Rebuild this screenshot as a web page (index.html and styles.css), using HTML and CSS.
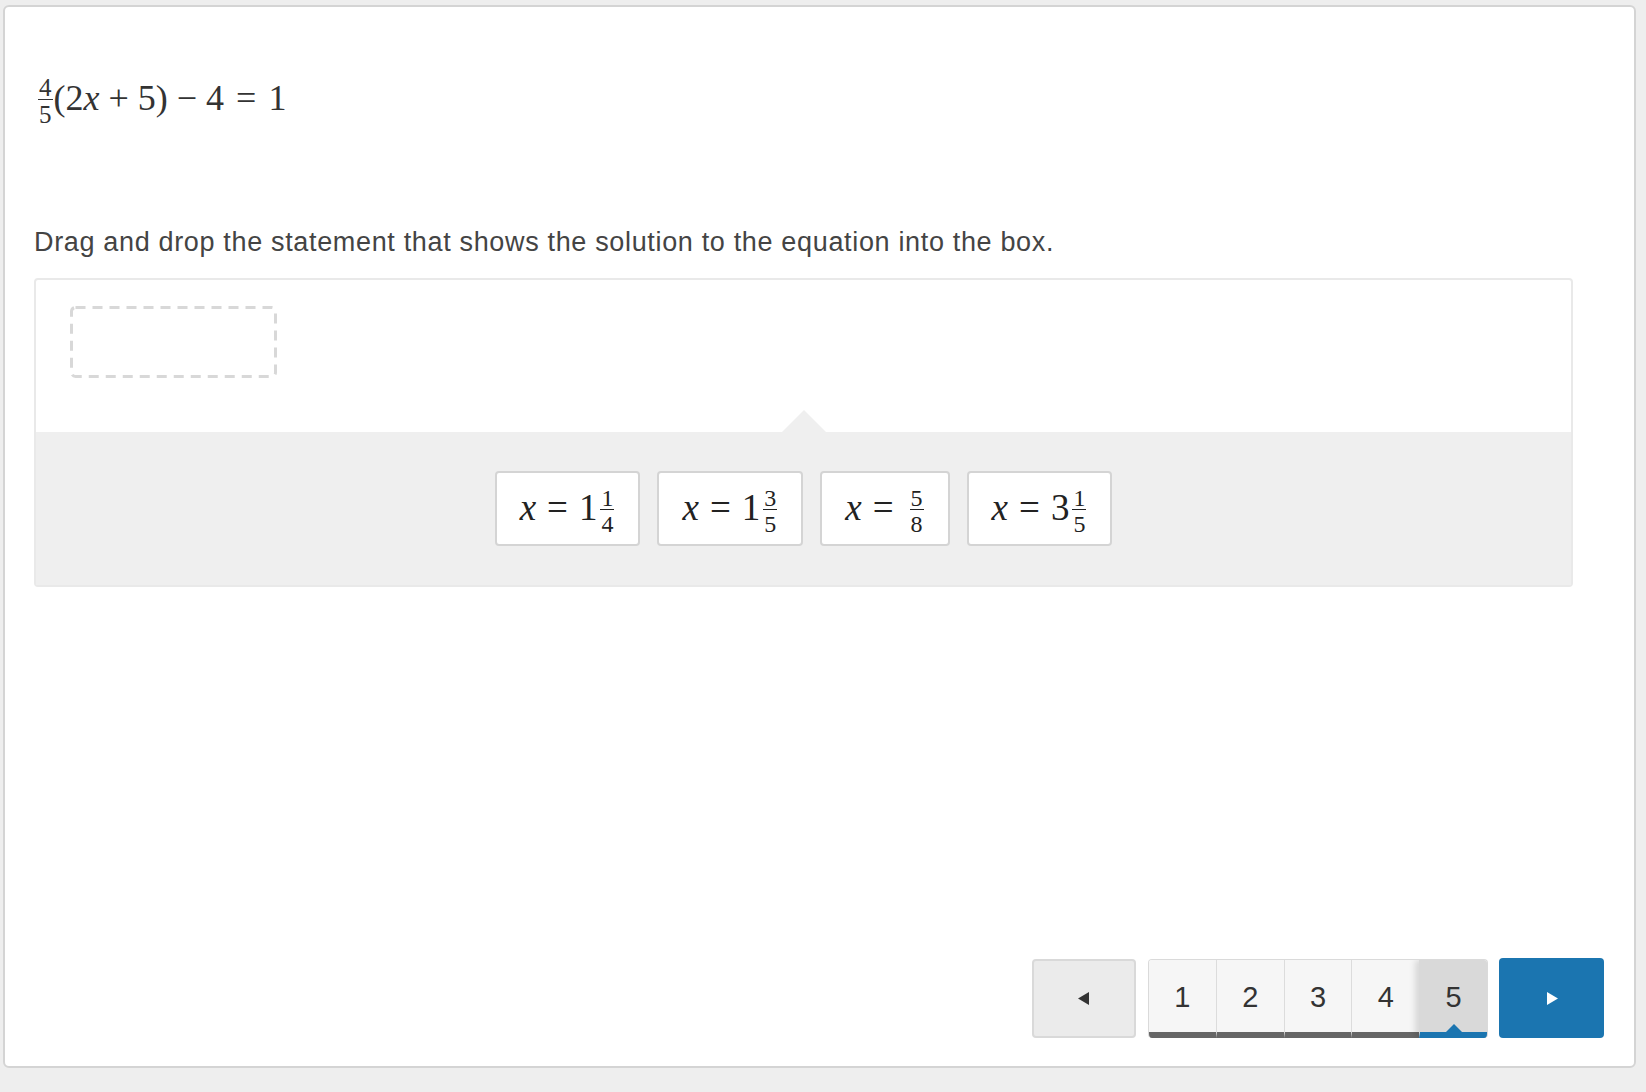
FILE: index.html
```html
<!DOCTYPE html>
<html>
<head>
<meta charset="utf-8">
<link rel="stylesheet" href="styles.css">
</head>
<body>
<div class="card">
  <div class="equation">
    <span class="frac"><span class="num">4</span><span class="den">5</span></span><span>(2</span><i class="mi">x</i><span class="op">+</span><span>5)</span><span class="op">−</span><span>4</span><span class="rel">=</span><span>1</span>
  </div>
  <p class="prompt">Drag and drop the statement that shows the solution to the equation into the box.</p>
  <div class="dnd">
    <div class="drop-area">
      <svg class="drop-box" width="207" height="72" viewBox="0 0 207 72"><rect x="1.5" y="1.5" width="204" height="69" rx="4" ry="4" fill="none" stroke="#d8d8d8" stroke-width="3" stroke-dasharray="10 7"/></svg>
    </div>
    <div class="tray">
      <div class="chip"><span class="m"><i class="mi">x</i><span class="rel">=</span><span>1</span><span class="frac"><span class="num">1</span><span class="den">4</span></span></span></div>
      <div class="chip"><span class="m"><i class="mi">x</i><span class="rel">=</span><span>1</span><span class="frac"><span class="num">3</span><span class="den">5</span></span></span></div>
      <div class="chip"><span class="m"><i class="mi">x</i><span class="rel">=</span><span class="frac spaced"><span class="num">5</span><span class="den">8</span></span></span></div>
      <div class="chip"><span class="m"><i class="mi">x</i><span class="rel">=</span><span>3</span><span class="frac"><span class="num">1</span><span class="den">5</span></span></span></div>
    </div>
  </div>
  <div class="pager">
    <button class="nav prev" type="button"><svg width="12" height="13" viewBox="0 0 12 13"><polygon points="11,0 11,13 0,6.5" fill="#333"/></svg></button>
    <div class="pages">
      <div class="page">1</div>
      <div class="page">2</div>
      <div class="page">3</div>
      <div class="page">4</div>
      <div class="page active">5</div>
    </div>
    <button class="nav next" type="button"><svg width="12" height="13" viewBox="0 0 12 13"><polygon points="1,0 1,13 12,6.5" fill="#fff"/></svg></button>
  </div>
</div>
</body>
</html>
```
FILE: styles.css
```css
html, body {
  margin: 0;
  padding: 0;
}
body {
  background: #eeeeee;
  padding: 5px 0 0 3px;
  font-family: "Liberation Sans", Arial, sans-serif;
}
.card {
  box-sizing: border-box;
  width: 1633px;
  height: 1063px;
  background: #fff;
  border: 2px solid #d4d4d4;
  border-radius: 6px;
  display: flex;
  flex-direction: column;
  padding: 0 30px 28px 29px;
}
.equation {
  margin-top: 69px;
  margin-left: 3px;
  height: 44px;
  font-family: "Liberation Serif", "Times New Roman", serif;
  font-size: 36px;
  line-height: 44px;
  color: #333;
  white-space: nowrap;
}
.mi {
  font-style: italic;
}
.op {
  margin: 0 9px;
}
.rel {
  margin: 0 12px;
}
.frac {
  display: inline-flex;
  flex-direction: column;
  align-items: center;
  vertical-align: 14px;
  font-size: 25px;
  line-height: 20px;
  margin: 0 1px;
}
.frac .num {
  padding: 0 1px 1px;
  border-bottom: 1px solid currentColor;
}
.frac .den {
  padding-top: 5px;
}
.prompt {
  margin: 106px 0 0;
  font-size: 27px;
  line-height: 32px;
  letter-spacing: 0.66px;
  color: #444;
}
.dnd {
  margin-top: 20px;
  width: 1539px;
  box-sizing: border-box;
  border: 2px solid #e9e9e9;
  border-radius: 4px;
}
.drop-area {
  height: 152px;
  box-sizing: border-box;
  padding: 26px 0 0 34px;
}
.drop-box {
  display: block;
}
.tray {
  position: relative;
  height: 153px;
  background: #efefef;
  display: flex;
  align-items: center;
  justify-content: center;
  gap: 17px;
}
.tray::before {
  content: "";
  position: absolute;
  top: -22px;
  left: 50%;
  margin-left: -22px;
  border-left: 22px solid transparent;
  border-right: 22px solid transparent;
  border-bottom: 22px solid #efefef;
}
.chip {
  box-sizing: border-box;
  height: 75px;
  padding: 0 23px;
  background: #fff;
  border: 2px solid #d4d4d4;
  border-radius: 4px;
  display: flex;
  align-items: center;
  font-family: "Liberation Serif", "Times New Roman", serif;
  font-size: 37px;
  color: #222;
  white-space: nowrap;
}
.chip .m {
  display: block;
  line-height: 40px;
  padding-top: 4px;
}
.chip .frac {
  font-size: 24px;
  line-height: 20px;
  vertical-align: 14px;
  margin-left: 3px;
}
.chip .frac .den {
  padding-top: 4px;
}
.chip .frac.spaced {
  margin-left: 5px;
}
.chip .rel {
  margin: 0 11px;
}
.pager {
  margin-top: auto;
  display: flex;
  justify-content: flex-end;
  align-items: flex-start;
  gap: 11px;
}
.nav {
  box-sizing: border-box;
  width: 104px;
  height: 79px;
  border-radius: 4px;
  display: flex;
  align-items: center;
  justify-content: center;
  padding: 0;
  cursor: pointer;
}
.prev {
  background: #ebebeb;
  border: 2px solid #d9d9d9;
  margin-right: 1px;
}
.next {
  width: 105px;
  height: 80px;
  margin-top: -1px;
  background: #1b75b0;
  border: none;
}
.pages {
  box-sizing: border-box;
  width: 340px;
  display: flex;
  border: 1px solid #dadada;
  border-bottom: none;
  border-radius: 4px;
  overflow: hidden;
}
.page {
  position: relative;
  flex: 1;
  height: 70px;
  border-bottom: 6px solid #666;
  border-left: 1px solid #dcdcdc;
  background: #f6f6f6;
  display: flex;
  align-items: center;
  justify-content: center;
  font-size: 29px;
  color: #333;
  padding-top: 2px;
  box-sizing: content-box;
}
.page:first-child {
  border-left: none;
}
.page.active {
  background: #d9d9d9;
  border-bottom-color: #1b75b0;
  box-shadow: -4px 0 6px rgba(0, 0, 0, 0.12);
  border-left-color: transparent;
}
.page.active::after {
  content: "";
  position: absolute;
  bottom: 0;
  left: 50%;
  margin-left: -8px;
  border-left: 8px solid transparent;
  border-right: 8px solid transparent;
  border-bottom: 8px solid #1b75b0;
}
```
